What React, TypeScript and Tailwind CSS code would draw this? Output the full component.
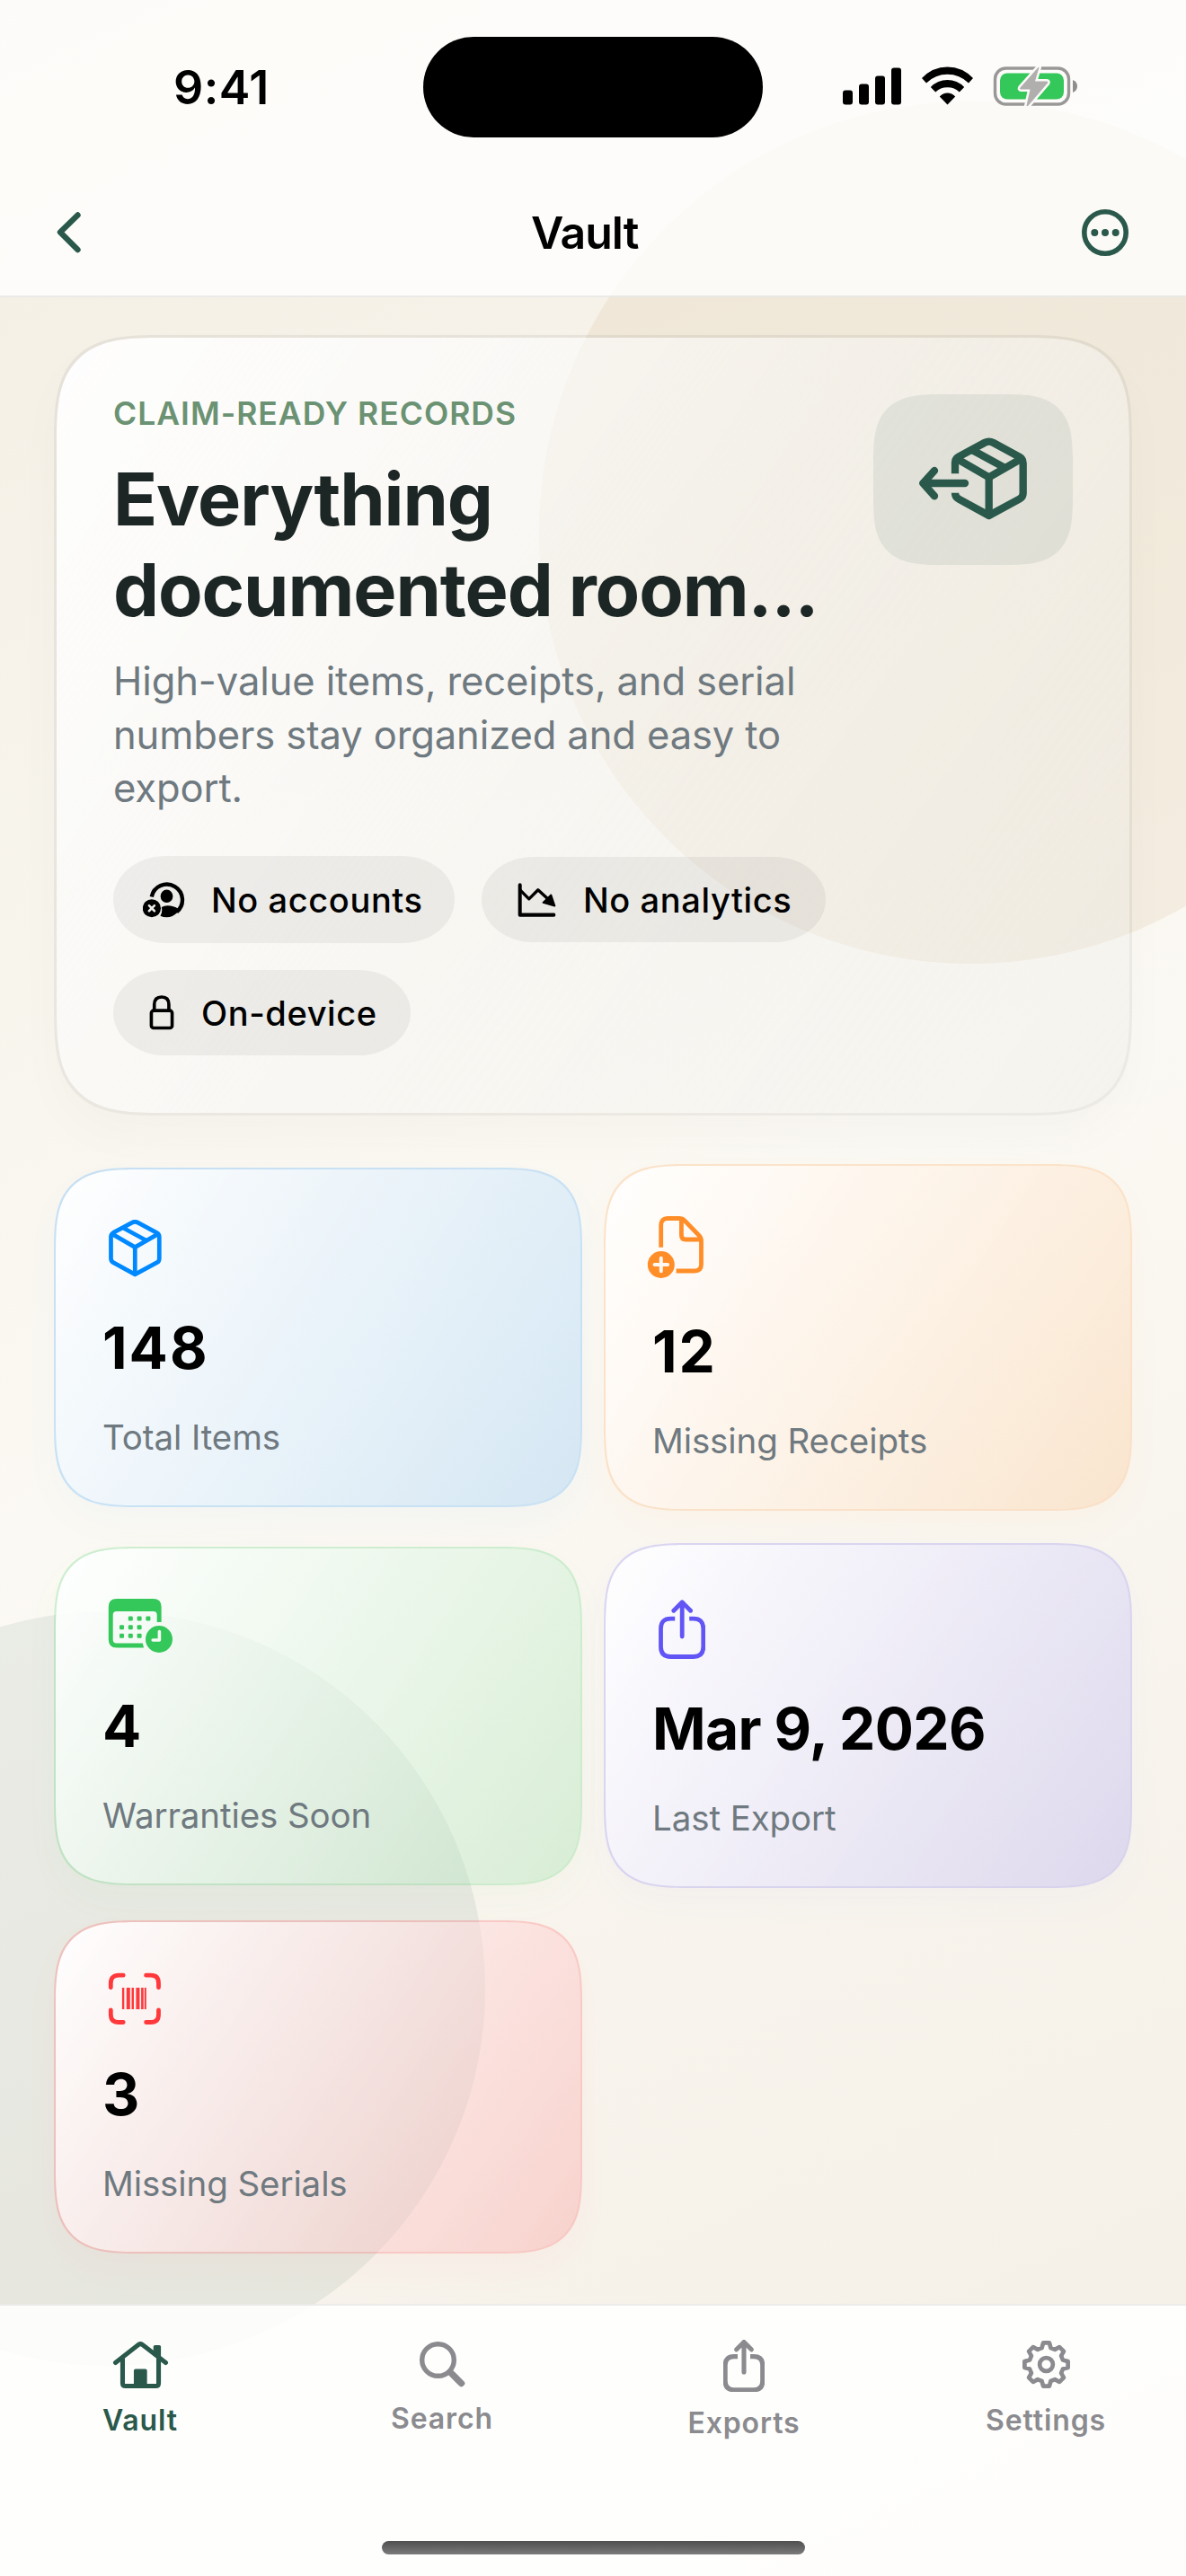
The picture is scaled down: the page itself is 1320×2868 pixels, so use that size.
import type { ReactNode } from "react"
import { clsx } from "clsx"

type IconProps = { className?: string; strokeWidth?: number }

function BoxLines() {
  return (
    <>
      <path d="M490 456L599 519L709 456" />
      <path d="M599 519V644" />
      <path d="M543 428L655 489" />
    </>
  )
}

function BoxIcon({ className, strokeWidth = 20 }: IconProps) {
  return (
    <svg viewBox="476 390 248 270" className={className} fill="none" stroke="currentColor" strokeWidth={strokeWidth} strokeLinejoin="round">
      <path d="M497 451L584 404Q599 396 614 404L702 452Q713 458 713 472V572Q713 585 702 591L599 647L497 591Q486 584 486 571V470Q486 457 497 451Z" />
      <BoxLines />
    </svg>
  )
}

function BoxArrowIcon({ className }: IconProps) {
  return (
    <svg viewBox="366 386 360 275" className={className} fill="none" stroke="currentColor" strokeWidth={25} strokeLinejoin="round">
      <path d="M486 507V470Q486 457 497 451L584 404Q599 396 614 404L702 452Q713 458 713 472V572Q713 585 702 591L599 647L497 591Q486 584 486 571" />
      <BoxLines />
      <path d="M519 539H379M417 497L379 539L417 582" strokeLinecap="round" />
    </svg>
  )
}

function DocPlusIcon({ className }: IconProps) {
  return (
    <svg viewBox="0 0 72 80" className={className} fill="none" stroke="currentColor" strokeWidth={4.8} strokeLinejoin="round">
      <path d="M9.7 38.7V14Q9.7 6.5 17 6.5H30Q33.5 6.5 36 9L52 25.5Q54.5 28 54.5 32V57.5Q54.5 65 47 65H26.6" />
      <path d="M32.4 7V25Q32.4 30 37 30H54" />
      <circle cx="9.8" cy="58" r="15" fill="currentColor" stroke="none" />
      <path d="M2.5 58H17.1M9.8 50.7V65.3" stroke="#fff7f2" strokeWidth={4} strokeLinecap="round" />
    </svg>
  )
}

const calendarDots = [
  [31.3, 26], [41.1, 26], [50.9, 26],
  [21.5, 35.7], [31.3, 35.7], [41.1, 35.7],
  [21.5, 45.3], [31.3, 45.3], [41.1, 45.3],
]

function CalendarClockIcon({ className }: IconProps) {
  return (
    <svg viewBox="0 0 72 71" className={className} fill="currentColor">
      <path d="M6.8 13Q6.8 4 15.8 4H56.6Q65.6 4 65.6 13V30H60.7V22Q60.7 18 56.7 18H15.7Q11.7 18 11.7 22V49.5Q11.7 53.5 15.7 53.5H44.8L46 58.5H15.8Q6.8 58.5 6.8 49.5Z" />
      {calendarDots.map(([x, y]) => (
        <rect key={`${x}-${y}`} x={x - 2.5} y={y - 2.5} width="5" height="5" rx="1.2" />
      ))}
      <circle cx="63" cy="49" r="15" />
      <path d="M63.4 40.5V50H56.2" fill="none" stroke="#f5faf5" strokeWidth={3.6} strokeLinecap="round" strokeLinejoin="round" />
    </svg>
  )
}

function ShareIcon({ className, strokeWidth = 4.8 }: IconProps) {
  return (
    <svg viewBox="6.8 9 52.4 66" className={className} fill="none" stroke="currentColor" strokeWidth={strokeWidth} strokeLinejoin="round">
      <path d="M25 30.2H20.3Q9.3 30.2 9.3 41V61.5Q9.3 72.5 20.3 72.5H45.6Q56.6 72.5 56.6 61.5V41Q56.6 30.2 45.6 30.2H41" />
      <path d="M33 12V50M23.6 21.3L33 11.8L42.4 21.3" strokeLinecap="round" />
    </svg>
  )
}

function BarcodeIcon({ className }: IconProps) {
  return (
    <svg viewBox="0 0 72 65" className={className} fill="currentColor">
      <path
        d="M23.2 7.2H18Q9.3 7.2 9.3 16V20.8M48.6 7.2H54Q62.5 7.2 62.5 16V20.8M9.3 46V50.7Q9.3 59.5 18 59.5H23.2M62.5 46V50.7Q62.5 59.5 54 59.5H48.6"
        fill="none"
        stroke="currentColor"
        strokeWidth={4.8}
        strokeLinecap="round"
      />
      <path d="M21.9 21h2.4v24h-2.4zM26.8 21h4v24h-4zM32.5 21h2.5v24h-2.5zM37.4 21h4v24h-4zM43.1 21h2.6v24h-2.6zM46.8 21h2v24h-2z" />
    </svg>
  )
}

function PersonXIcon({ className }: IconProps) {
  return (
    <svg viewBox="144 120 140 122" className={className} fill="currentColor">
      <path d="M173 172A51.5 51.5 0 1 1 256 222" fill="none" stroke="currentColor" strokeWidth="13" />
      <ellipse cx="223" cy="170" rx="20.5" ry="21.5" />
      <path d="M206 206Q214 201 226 201Q246 201 262 212L258 224Q243 240 223 240Q212 240 202 235Q210 221 206 206Z" />
      <circle cx="173.5" cy="210" r="30" />
      <path d="M164.5 201L182.5 219M182.5 201L164.5 219" stroke="#ececea" strokeWidth="7.5" strokeLinecap="round" />
    </svg>
  )
}

function ChartDownIcon({ className }: IconProps) {
  return (
    <svg viewBox="1380 128 128 113" className={className} fill="none" stroke="currentColor" strokeWidth="12" strokeLinecap="round" strokeLinejoin="round">
      <path d="M1388 135V234H1500" />
      <path d="M1390 153L1418 181L1448 151L1482 182" strokeWidth="10" />
      <path d="M1491 168L1465 193L1503 204Z" fill="currentColor" strokeWidth="6" />
    </svg>
  )
}

function LockIcon({ className }: IconProps) {
  return (
    <svg viewBox="168 502 82 118" className={className} fill="none" stroke="currentColor" strokeWidth="11">
      <rect x="174" y="554" width="70" height="58.5" rx="8" />
      <path d="M184 554V534Q184 508 209 508Q233 508 233 534V554" />
    </svg>
  )
}

function HouseIcon({ className }: IconProps) {
  return (
    <svg viewBox="0 0 64 55" className={className} fill="currentColor">
      <path d="M3.5 25L29.8 4.4Q31.8 3 33.8 4.4L60.5 25" fill="none" stroke="currentColor" strokeWidth="5.2" strokeLinecap="round" />
      <path d="M11.6 20V48Q11.6 51.5 15 51.5H49Q52.4 51.5 52.4 48V20" fill="none" stroke="currentColor" strokeWidth="5.2" />
      <path d="M46.5 7Q46.5 5 48.5 5H53Q55 5 55 7V22L46.5 15Z" />
      <path d="M24.3 34Q24.3 32 26.3 32H37.3Q39.3 32 39.3 34V52H24.3Z" />
    </svg>
  )
}

function SearchIcon({ className }: IconProps) {
  return (
    <svg viewBox="0 0 51 51" className={className} fill="none" stroke="currentColor">
      <circle cx="20.5" cy="20.5" r="17.8" strokeWidth="5.4" />
      <path d="M34 34L46.5 46.5" strokeWidth="7.4" strokeLinecap="round" />
    </svg>
  )
}

const gearPoints = Array.from({ length: 8 }, (_, i) => {
  const at = (r: number, deg: number) => {
    const a = ((i * 45 + deg - 90) * Math.PI) / 180
    return `${(28 + r * Math.cos(a)).toFixed(2)},${(28 + r * Math.sin(a)).toFixed(2)}`
  }
  return [at(19.5, -15), at(24.8, -8), at(24.8, 8), at(19.5, 15)].join(" ")
}).join(" ")

function GearIcon({ className }: IconProps) {
  return (
    <svg viewBox="0 0 56 56" className={className} fill="none" stroke="currentColor" strokeWidth="4.8" strokeLinejoin="round">
      <polygon points={gearPoints} />
      <circle cx="28" cy="28" r="7.5" />
    </svg>
  )
}

function StatusBar() {
  return (
    <div className="flex h-[194px] items-center pl-[193px]">
      <div className="w-[278px] pt-0.5 text-[52px] leading-none font-semibold tracking-[0.5px]">9:41</div>
      <div className="mr-[89px] h-[112px] w-[378px] rounded-full bg-black" />
      <svg viewBox="0 0 262 46" className="h-[46px] w-[262px]">
        <rect x="0" y="26.5" width="11" height="16" rx="3" />
        <rect x="18" y="19.5" width="11" height="23" rx="3" />
        <rect x="36" y="10.5" width="11" height="32" rx="3" />
        <rect x="54" y="1.5" width="11" height="41" rx="3" />
        <path d="M116.5 .5Q133 .5 145 13L140 18.5Q130 8.8 116.5 8.8Q103 8.8 93 18.5L88 13Q100 .5 116.5 .5Z" />
        <path d="M116.5 15Q127.5 15 135.2 23L129.8 28.5Q124.5 23.3 116.5 23.3Q108.5 23.3 103.2 28.5L97.8 23Q105.5 15 116.5 15Z" />
        <path d="M116.5 29.5Q121.5 29.5 125.2 33.5L116.5 42.5L107.8 33.5Q111.5 29.5 116.5 29.5Z" />
        <rect x="169.5" y="2" width="82" height="40" rx="12" fill="none" stroke="#999897" strokeWidth="3.4" />
        <rect x="175" y="7.5" width="71" height="29" rx="8" fill="#34c759" />
        <path d="M256 15Q261 17 261 22Q261 27 256 29Z" fill="#8f8e8d" />
        <path
          d="M217.5 1L197.5 23.5Q196.5 25.5 198.5 25.5H208.5L204.5 43.5Q205 45 206.5 43.5L228 18.5Q229 16.5 227 16.5H214L218.5 1Z"
          fill="#b0afae"
          stroke="#fbfaf8"
          strokeWidth="5"
          strokeLinejoin="round"
          className="[paint-order:stroke]"
        />
      </svg>
    </div>
  )
}

function Header() {
  return (
    <header className="h-[331px] border-b-2 border-black/7 bg-white/78">
      <StatusBar />
      <div className="flex h-[130px] items-center pr-16 pl-[63px]">
        <svg viewBox="0 0 27 46" className="h-[46px] w-[27px] text-[#2a594b]" fill="none" stroke="currentColor" strokeWidth="6.4" strokeLinecap="round" strokeLinejoin="round">
          <path d="M23.5 3.5L4 22.5L23.5 42" />
        </svg>
        <h1 className="ml-[501px] text-[50px] leading-none font-semibold tracking-[-1px]">Vault</h1>
        <svg viewBox="0 0 52 52" className="ml-auto size-[52px] text-[#2a594b]" fill="currentColor">
          <circle cx="26" cy="26" r="23.2" fill="none" stroke="currentColor" strokeWidth="5.6" />
          <circle cx="14.3" cy="26" r="4" />
          <circle cx="26" cy="26" r="4" />
          <circle cx="37.7" cy="26" r="4" />
        </svg>
      </div>
    </header>
  )
}

function Chip({ className, children }: { className: string; children: ReactNode }) {
  return (
    <div className={clsx("flex items-center rounded-[58px/48px] bg-black/5 text-[38px] leading-none font-medium tracking-[0.6px]", className)}>
      {children}
    </div>
  )
}

function HeroCard() {
  return (
    <section className="h-[869px] rounded-[84px] border-[3px] border-black/6 bg-[#3c3c1e]/4 bg-linear-[126deg] from-white/95 via-white/50 to-white/20 bg-clip-padding px-[63px] pt-[63px] shadow-[0_24px_54px_rgba(0,0,0,0.025)] supports-[corner-shape:squircle]:rounded-[120px] supports-[corner-shape:squircle]:[corner-shape:superellipse(1.6)]">
      <div className="flex justify-between">
        <div>
          <p className="text-[35.5px] leading-[43px] font-semibold tracking-[1px] text-[#6b9273]">CLAIM-READY RECORDS</p>
          <h2 className="mt-6 text-[81px] leading-[101px] font-bold tracking-[-1.1px] whitespace-nowrap text-[#1c2625]">
            Everything
            <br />
            documented room...
          </h2>
          <p className="mt-[21px] text-[43.5px] leading-[59.7px] tracking-[-0.1px] whitespace-nowrap text-[#6f7980]">
            High-value items, receipts, and serial
            <br />
            numbers stay organized and easy to
            <br />
            export.
          </p>
        </div>
        <div className="flex h-[190px] w-[222px] items-center justify-center rounded-[54px] bg-[#2a594b]/9 text-[#2a594b] supports-[corner-shape:squircle]:rounded-[77px] supports-[corner-shape:squircle]:[corner-shape:superellipse(1.6)]">
          <BoxArrowIcon className="mb-0.5 h-[91.7px] w-[120px]" />
        </div>
      </div>
      <div className="mt-[45px] flex flex-wrap items-center gap-[30px]">
        <Chip className="h-[97px] w-[380px] pl-[33px]">
          <PersonXIcon className="mr-[29px] h-[41px] w-[47px]" />
          No accounts
        </Chip>
        <Chip className="h-[95px] w-[383px] pl-10">
          <ChartDownIcon className="mr-[30px] h-[38px] w-[43px]" />
          No analytics
        </Chip>
        <Chip className="h-[95px] w-[331px] pl-10">
          <LockIcon className="mr-[30px] h-[39px] w-[28px]" />
          On-device
        </Chip>
      </div>
    </section>
  )
}

const stats = [
  {
    label: "Total Items",
    value: "148",
    card: "border-[#0088ff]/20 bg-[#0088ff]/15 shadow-[0_18px_42px_rgba(0,136,255,0.03)]",
    icon: <BoxIcon className="mx-[7px] my-1 h-16 w-[59px] text-[#0088ff]" />,
  },
  {
    label: "Missing Receipts",
    value: "12",
    card: "border-[#ff8d28]/20 bg-[#ff8d28]/16 shadow-[0_18px_42px_rgba(255,141,40,0.03)]",
    icon: <DocPlusIcon className="h-20 w-[72px] overflow-visible text-[#ff8d28]" />,
  },
  {
    label: "Warranties Soon",
    value: "4",
    card: "border-[#34c759]/22 bg-[#34c759]/16 shadow-[0_18px_42px_rgba(52,199,89,0.03)]",
    icon: <CalendarClockIcon className="h-[71px] w-[72px] overflow-visible text-[#34c759]" />,
  },
  {
    label: "Last Export",
    value: "Mar 9, 2026",
    card: "border-[#6155f5]/20 bg-[#6155f5]/17 shadow-[0_18px_42px_rgba(97,85,245,0.03)]",
    icon: <ShareIcon className="mx-[7px] mt-[9px] mb-[3px] h-[66px] w-[52.4px] text-[#6155f5]" />,
  },
  {
    label: "Missing Serials",
    value: "3",
    card: "border-[#ff383c]/22 bg-[#ff383c]/17 shadow-[0_18px_42px_rgba(255,56,60,0.03)]",
    icon: <BarcodeIcon className="h-[65px] w-[72px] text-[#ff383c]" />,
  },
]

function StatCard({ stat }: { stat: (typeof stats)[number] }) {
  return (
    <article
      className={clsx(
        "flex flex-col rounded-[66px] border-2 bg-linear-[123deg] from-white/98 via-white/68 via-30% to-white/0 bg-clip-padding p-[52px] supports-[corner-shape:squircle]:rounded-[94px] supports-[corner-shape:squircle]:[corner-shape:superellipse(1.6)]",
        stat.card,
      )}
    >
      {stat.icon}
      <p className={clsx("mt-9 text-[64px] leading-[78px] font-bold whitespace-nowrap", stat.value.length > 3 ? "tracking-[-0.6px]" : "tracking-[2px]")}>
        {stat.value}
      </p>
      <p className="mt-9 text-[38.5px] leading-[48px] tracking-[-0.1px] whitespace-nowrap text-[#6f7980]">{stat.label}</p>
    </article>
  )
}

const tabs = [
  { name: "Vault", active: true, icon: <HouseIcon className="mt-[39px] h-[54px] w-[63px]" /> },
  { name: "Search", active: false, icon: <SearchIcon className="mt-10 size-[51px]" /> },
  { name: "Exports", active: false, icon: <ShareIcon className="mt-[38px] h-[58px] w-[46px]" strokeWidth={5.8} /> },
  { name: "Settings", active: false, icon: <GearIcon className="mt-[38px] size-[55px]" /> },
]

function TabBar() {
  return (
    <nav className="flex h-[303px] flex-col items-center justify-between border-t-2 border-black/7 bg-white/88 pb-6">
      <div className="flex gap-6">
        {tabs.map((tab) => (
          <div key={tab.name} className={clsx("flex w-[312px] flex-col items-center", tab.active ? "text-[#2a594b]" : "text-[#8b8b8f]")}>
            {tab.icon}
            <span className="mt-[15px] text-[32px] leading-[39px] font-semibold tracking-[0.9px]">{tab.name}</span>
          </div>
        ))}
      </div>
      <div className="h-[15px] w-[471px] rounded-full bg-linear-to-b from-[#4f4f4f] to-[#7b7b7b]" />
    </nav>
  )
}

export default function App() {
  return (
    <div className="relative flex h-[2868px] w-[1320px] flex-col overflow-hidden bg-linear-[155deg] from-[#f3eee3] via-[#fbf9f3] to-[#f4eee5] font-[Inter,'Liberation_Sans',sans-serif] text-black">
      {/* Ambient circles behind the translucent bars and cards */}
      <div className="absolute top-[113px] left-[600px] size-[960px] rounded-full bg-[#c08f50]/11" />
      <div className="absolute top-[1794px] -left-[300px] size-[840px] rounded-full bg-[#2a594b]/8" />

      <div className="relative flex flex-1 flex-col">
        <Header />
        <main className="flex-1 px-[60px] pt-[42px]">
          <HeroCard />
          <div className="mt-[54px] grid grid-cols-2 items-center gap-x-6 gap-y-9">
            {stats.map((stat) => (
              <StatCard key={stat.label} stat={stat} />
            ))}
          </div>
        </main>
        <TabBar />
      </div>
    </div>
  )
}
